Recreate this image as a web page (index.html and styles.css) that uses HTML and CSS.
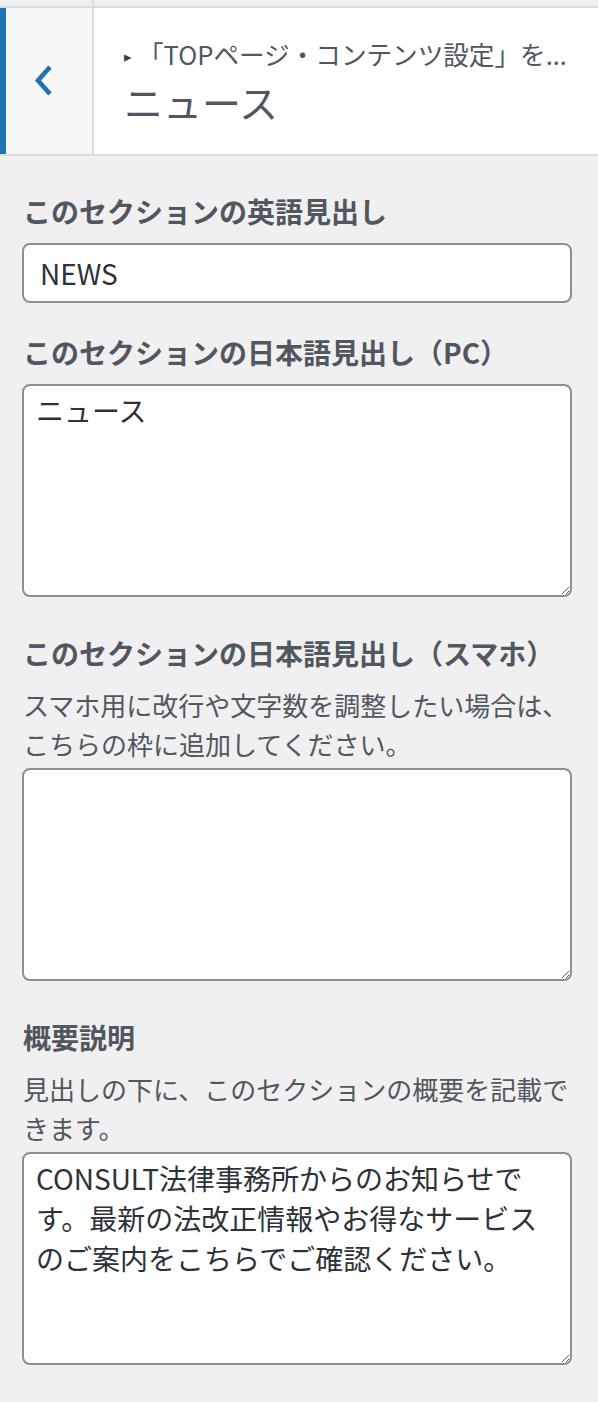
FILE: index.html
```html
<!DOCTYPE html>
<html lang="ja">

<head>
  <meta charset="UTF-8">
  <meta name="viewport" content="width=device-width, initial-scale=1.0">
  <title>ニュース</title>

  <link rel="stylesheet" href="styles.css">
</head>

<body>
  <div class="panel">
    <div class="top-strip">
      <span class="top-strip-left"></span>
    </div>

    <header class="section-head">
      <button class="back" aria-label="戻る">
        <svg width="20" height="32" viewBox="0 0 20 32">
          <polyline points="16,2 4,15.5 16,29" fill="none" stroke="#2271b1" stroke-width="4.6" stroke-linejoin="miter" />
        </svg>
      </button>
      <div class="section-title">
        <span class="crumb"><span class="crumb-arrow">▸</span>「TOPページ・コンテンツ設定」を...</span>
        <h3>ニュース</h3>
      </div>
    </header>

    <ul class="controls">
      <li class="control">
        <label class="control-title" for="en-title">このセクションの英語見出し</label>
        <input id="en-title" type="text" value="NEWS" />
      </li>
      <li class="control">
        <label class="control-title" for="ja-title">このセクションの日本語見出し（PC）</label>
        <textarea id="ja-title">ニュース</textarea>
      </li>
      <li class="control">
        <label class="control-title" for="ja-title-sp">このセクションの日本語見出し（スマホ）</label>
        <p class="description">スマホ用に改行や文字数を調整したい場合は、こちらの枠に追加してください。</p>
        <textarea id="ja-title-sp"></textarea>
      </li>
      <li class="control">
        <label class="control-title" for="summary">概要説明</label>
        <p class="description">見出しの下に、このセクションの概要を記載できます。</p>
        <textarea id="summary">CONSULT法律事務所からのお知らせです。最新の法改正情報やお得なサービスのご案内をこちらでご確認ください。</textarea>
      </li>
    </ul>
  </div>
</body>

</html>
```

FILE: styles.css
```css
body {
  background: #f0f0f1;
  color: #50575e;
  font-family: "Noto Sans CJK JP", "Noto Sans", sans-serif;
  margin: 0;
}

.panel {
  width: 598px;
}

.top-strip {
  display: flex;
  height: 6px;
}

.top-strip-left {
  border-right: 2px solid #dcdcde;
  width: 92px;
}

.section-head {
  background: #fff;
  border-bottom: 2px solid #dcdcde;
  border-top: 2px solid #dcdcde;
  display: flex;
  height: 146px;
}

.back {
  align-items: center;
  background: #f6f7f7;
  border: 0;
  border-left: 6px solid #2271b1;
  border-right: 2px solid #dcdcde;
  display: flex;
  padding: 0 0 0 28px;
  width: 94px;
}

.back:hover {
  cursor: pointer;
}

.section-title {
  display: flex;
  flex: 1;
  flex-direction: column;
  min-width: 0;
  padding: 28px 10px 0 30px;
}

.crumb {
  color: #50575e;
  font-size: 25.6px;
  line-height: 36px;
  white-space: nowrap;
}

.crumb-arrow {
  color: #3c434a;
  display: inline-block;
  font-size: 15px;
  margin-right: 6px;
  vertical-align: 3px;
}

.section-title h3 {
  color: #50575e;
  font-size: 39px;
  font-weight: 400;
  line-height: 52px;
  margin: 1px 0 0;
}

.controls {
  display: flex;
  flex-direction: column;
  gap: 25px;
  list-style: none;
  margin: 0;
  padding: 31px 26px 0 22px;
}

.control-title {
  display: block;
  font-size: 28px;
  font-weight: 700;
  line-height: 48px;
  margin: 0 0 8px 1px;
}

.description {
  font-size: 26px;
  line-height: 39px;
  margin: 0 0 5px 1px;
}

input,
textarea {
  background: #fff;
  border: 2px solid #8c8f94;
  border-radius: 8px;
  box-sizing: border-box;
  color: #2c3338;
  display: block;
  font-family: "Noto Sans CJK JP", "Noto Sans", sans-serif;
  font-size: 28px;
  margin: 0;
  width: 100%;
}

input {
  height: 60px;
  padding: 0 16px;
}

textarea {
  height: 213px;
  line-height: 40px;
  margin-bottom: 7px;
  padding: 4px 12px;
  resize: vertical;
}
```
